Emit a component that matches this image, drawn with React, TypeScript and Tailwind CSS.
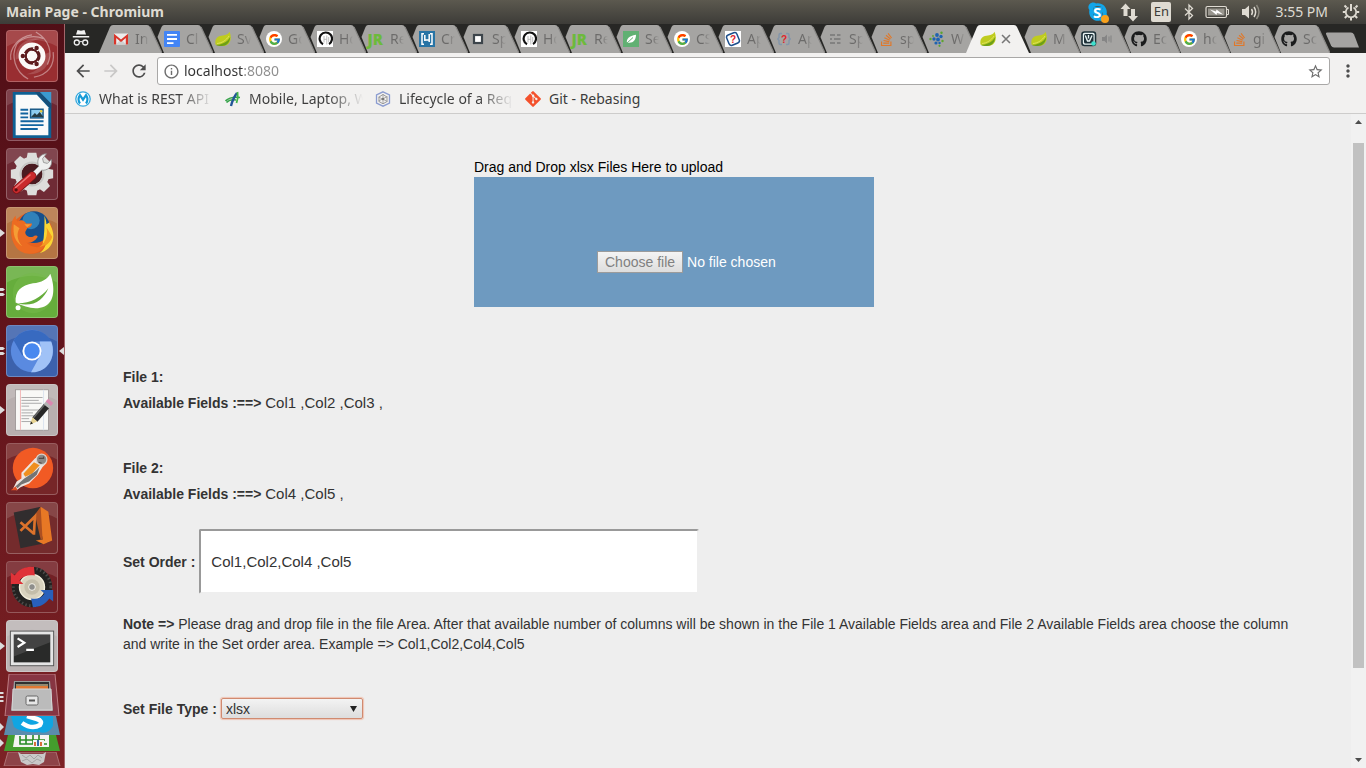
import React from "react";
import { FcGoogle } from "react-icons/fc";
import { FaGithub, FaSkype, FaStackOverflow, FaGitAlt } from "react-icons/fa";
import {
  MdArrowBack,
  MdArrowForward,
  MdRefresh,
  MdInfoOutline,
  MdStarBorder,
  MdMoreVert,
} from "react-icons/md";

/* ---------- favicons ---------- */

const Gmail = () => (
  <svg viewBox="0 0 16 16" className="size-4">
    <path d="M1 2.500h14v11H1z" fill="#ececec" />
    <path d="M3 13.500 8 8l5 5.500z" fill="#d0d0d0" />
    <path d="M1 13.500V2.700L8 8.500l7-5.800v10.800h-2.200V7L8 11 3.200 7v6.500z" fill="#d9352a" />
  </svg>
);
const Docs = () => (
  <svg viewBox="0 0 16 16" className="size-4">
    <rect width="16" height="16" rx="1" fill="#4385f5" />
    <path d="M3 3.800h10M3 8h10M3 12.200h6.500" stroke="#fff" strokeWidth="1.800" />
  </svg>
);
const SpringLeaf = () => (
  <svg viewBox="0 0 16 16" className="size-4">
    <path d="M.5 13.500C-.5 7 3 5 8 4.500 11.500 4 13.500 3 14.500.8 17 6 16 13 10.500 14.500 6.500 15.600 3 14.800.5 13.500Z" fill="#bfcc1f" />
    <path d="M1 14C6 13.500 12 12 15.200 6 15 12 11 15 7 15 4 15 2 14.700 1 14Z" fill="#6d9f18" />
    <path d="M2 12.500C7 12 11 9.500 14 5" stroke="#e3e86c" strokeWidth=".8" fill="none" />
  </svg>
);
const Google = () => (
  <span className="flex size-4 items-center justify-center rounded-full bg-white">
    <FcGoogle size={13} />
  </span>
);
const RingLogo = () => (
  <svg viewBox="0 0 16 16" className="size-4">
    <rect width="16" height="16" fill="#fff" />
    <path d="M6 13.200A6.200 6.200 0 1 1 12 13" stroke="#111" strokeWidth="2.200" fill="none" />
    <path d="M7 5v6.500M9.800 4.500v9M7 8.300h2.800M11.700 6v5" stroke="#b5b5b5" strokeWidth=".9" fill="none" />
  </svg>
);
const JR = () => (
  <svg viewBox="0 0 16 16" className="size-4 overflow-visible">
    <text x="-.5" y="13.500" fontFamily="Open Sans, sans-serif" fontSize="15" fontWeight="800" fill="#6dba3b">
      JR
    </text>
  </svg>
);
const Brackets = () => (
  <svg viewBox="0 0 16 16" className="size-4">
    <rect width="16" height="16" fill="#2874a5" />
    <path d="M5 2.800H3v10.400h2M11 2.800h2v10.400h-2M5.800 4v6M5.800 9h4.400M10.200 3v8" stroke="#fff" strokeWidth="1.500" fill="none" />
  </svg>
);
const Square = () => (
  <svg viewBox="0 0 16 16" className="size-4">
    <rect x="4" y="4" width="8" height="8" fill="#fff" stroke="#3d454b" strokeWidth="2.200" />
  </svg>
);
const GreenLeaf = () => (
  <svg viewBox="0 0 16 16" className="size-4">
    <rect width="16" height="16" fill="#61b073" />
    <path d="M4 12C3 8 6 5 13 3.800c0 5-2.500 8.200-7 8z" fill="#fff" />
    <path d="M3 13 10 6.500" stroke="#61b073" strokeWidth="1" />
  </svg>
);
const QuestionBox = () => (
  <svg viewBox="0 0 16 16" className="size-4">
    <rect width="16" height="16" fill="#fff" />
    <rect x="2.500" y="2.500" width="11" height="11" rx="2.500" transform="rotate(-22 8 8)" fill="none" stroke="#1d4f8c" strokeWidth="1.500" />
    <text x="5" y="12" fontFamily="Liberation Sans, sans-serif" fontSize="10" fontWeight="700" fill="#e0242b">?</text>
  </svg>
);
const QuestionBraces = () => (
  <svg viewBox="0 0 16 16" className="size-4">
    <path d="M6 2.500H4.500Q3 2.500 3 4v2.500L1.800 8 3 9.500V12q0 1.500 1.500 1.500H6M10 2.500h1.500Q13 2.500 13 4v2.500L14.200 8 13 9.500V12q0 1.500-1.500 1.500H10" fill="none" stroke="#8496ab" strokeWidth="1.500" />
    <text x="5" y="11.500" fontFamily="Liberation Sans, sans-serif" fontSize="10" fontWeight="700" fill="#e0242b">?</text>
  </svg>
);
const Dashes = () => (
  <svg viewBox="0 0 16 16" className="size-4">
    <path d="M3 4h5M10 4h3.500M3 8h2M7 8h6.500M3 12h5M10 12h3.500" stroke="#777" strokeWidth="1.600" />
  </svg>
);
const Dots = () => (
  <svg viewBox="0 0 16 16" className="size-4">
    <g fill="#1f63b0">
      <circle cx="8" cy="4" r="1.900" /><circle cx="12" cy="5.500" r="1.700" /><circle cx="5" cy="8" r="1.700" />
      <circle cx="9" cy="8.500" r="1.900" /><circle cx="7" cy="12" r="1.600" /><circle cx="10.500" cy="12" r="1.200" />
    </g>
    <g fill="#5ca52c">
      <circle cx="12.500" cy="1.700" r="1.200" /><circle cx="1.500" cy="8" r="1.200" /><circle cx="13.500" cy="10" r="1.200" />
      <circle cx="10.500" cy="14.800" r="1.100" /><circle cx="4" cy="5" r=".9" />
    </g>
  </svg>
);
const Valve = () => (
  <svg viewBox="0 0 16 16" className="size-4">
    <rect x="1" y="1" width="13.500" height="13.500" rx="2.500" fill="#e9f3f3" stroke="#1d3038" strokeWidth="1.600" />
    <rect x="3" y="3" width="9.500" height="9.500" rx="1.500" fill="#1d3038" />
    <path d="M4.300 4.500 6.500 10h2L11 4.500M7.500 4v3.500" stroke="#e9f3f3" strokeWidth="1.400" fill="none" />
    <circle cx="12.500" cy="12.500" r="2.300" fill="#3fe0cd" />
  </svg>
);
const Stack = () => <FaStackOverflow size={15} color="#e0782a" />;
const Github = () => <FaGithub size={16} color="#1b1c1d" />;

const Speaker = () => (
  <svg viewBox="0 0 12 12" className="size-3">
    <path d="M1 4h2.500L6 1.500v9L3.500 8H1z" fill="#858585" />
    <path d="M8 3.500v5M10 2.500v7" stroke="#858585" strokeWidth="1.100" />
  </svg>
);

type TabInfo = { icon: React.FC; text: string; kind?: "active" | "audio" };

const wideTabs: TabInfo[] = [
  { icon: Gmail, text: "In" },
  { icon: Docs, text: "Cl" },
  { icon: SpringLeaf, text: "Sv" },
  { icon: Google, text: "Go" },
  { icon: RingLogo, text: "Ho" },
  { icon: JR, text: "Re" },
  { icon: Brackets, text: "Cr" },
  { icon: Square, text: "Sp" },
  { icon: RingLogo, text: "Ho" },
  { icon: JR, text: "Re" },
  { icon: GreenLeaf, text: "Se" },
  { icon: Google, text: "CS" },
  { icon: QuestionBox, text: "Ap" },
  { icon: QuestionBraces, text: "Ap" },
  { icon: Dashes, text: "Sp" },
  { icon: Stack, text: "sp" },
  { icon: Dots, text: "W" },
  { icon: SpringLeaf, text: "", kind: "active" },
];
const narrowTabs: TabInfo[] = [
  { icon: SpringLeaf, text: "M" },
  { icon: Valve, text: "", kind: "audio" },
  { icon: Github, text: "Ec" },
  { icon: Google, text: "ho" },
  { icon: Stack, text: "gi" },
  { icon: Github, text: "Sc" },
];

function Tab({ tab, first, width }: { tab: TabInfo; first?: boolean; width: string }) {
  const active = tab.kind === "active";
  const Icon = tab.icon;
  const shape = active || first
    ? "M0 28 11 2Q12 0 14 0H48Q50 0 51 2L63 28Z"
    : "M14 28 7.500 12 11.500 2Q12.500 0 14 0H48Q50 0 51 2L63 28Z";
  return (
    <button className={`relative flex h-7 items-center pl-3.5 ${width} ${active ? "z-10" : ""}`} aria-label={tab.text || "Main Page"}>
      <svg viewBox="0 0 63 28" preserveAspectRatio="none" className="absolute top-0 left-0 h-7 w-[63px]">
        <path d={shape} fill={active ? "#f2f1f0" : "#a5a4a2"} />
        {!active && <path d="M51 2 63 28" stroke="#8b8a88" strokeWidth="1.200" />}
      </svg>
      <span className="relative flex size-4 shrink-0 items-center justify-center"><Icon /></span>
      {tab.kind === "active" && (
        <svg viewBox="0 0 10 10" className="relative ml-1 size-3 shrink-0">
          <path d="M1.700 1.700l6.600 6.600M8.300 1.700l-6.600 6.600" stroke="#777" strokeWidth="1.300" />
        </svg>
      )}
      {tab.kind === "audio" && <span className="relative ml-1 shrink-0"><Speaker /></span>}
      {tab.text && (
        <span className="relative ml-1.5 w-3.5 shrink-0 overflow-hidden bg-linear-to-r from-[#6c6b6a] from-50% to-transparent bg-clip-text text-left font-[Noto_Sans,sans-serif] text-[14px] leading-5 whitespace-nowrap text-transparent">
          {tab.text}
        </span>
      )}
    </button>
  );
}

/* ---------- top panel ---------- */

function SystemBar() {
  return (
    <header className="flex h-6 shrink-0 items-center justify-between bg-linear-to-b from-[#5c594f] to-[#3d3c38] pr-1.5 pl-1.5 font-[Noto_Sans,sans-serif] text-[#dfdbd2]">
      <h1 className="text-[14px] leading-6 font-bold">Main Page - Chromium</h1>
      <div className="flex items-center">
        <span className="relative mr-2.5 flex size-[22px] items-center justify-center">
          <FaSkype size={22} color="#12a5e8" />
          <svg viewBox="0 0 22 22" className="absolute inset-0">
            <path d="M6.500 6h9v10h-9z" fill="#12a5e8" />
            <text x="6" y="16.500" fontSize="15" fontWeight="700" fontFamily="Open Sans, sans-serif" fill="#fff">S</text>
            <circle cx="18" cy="18" r="4" fill="#f9a11b" />
          </svg>
        </span>
        <svg viewBox="0 0 20 20" className="mr-3 size-5" fill="#dfdbd2">
          <path d="M6.500 1.500 11.500 7H8.500v7h-4V7h-3zM14 19.500 9 14h3V7h4v7h3z" />
        </svg>
        <span className="mr-3 flex h-5 w-5 items-center justify-center rounded-xs bg-[#dfdbd2] text-[13px] text-[#3d3c38]">En</span>
        <svg viewBox="0 0 12 18" className="mr-2.5 h-[18px] w-3" fill="none" stroke="#dfdbd2" strokeWidth="1.300">
          <path d="m2 5.500 7.500 7-3.500 3.500V2l3.500 3.500-7.500 7" />
        </svg>
        <svg viewBox="0 0 24 14" className="mr-3 h-3.5 w-6">
          <rect x="1" y="1.500" width="20.500" height="11" rx="1.500" fill="none" stroke="#dfdbd2" strokeWidth="1.200" />
          <rect x="3" y="3.500" width="16.500" height="7" fill="#98958d" />
          <path d="M22 4.500h1.500v5H22" stroke="#dfdbd2" fill="none" />
          <path d="m5 4.500 6 2 .5-2L18 9.500l-6-1.500-.5 2z" fill="#fff" />
        </svg>
        <svg viewBox="0 0 20 18" className="mr-3.5 h-[18px] w-5">
          <path d="M1 6h3l4-3.500v13L4 12H1z" fill="#dfdbd2" />
          <path d="M10.500 6q2 3 0 6M13 4q3.300 5 0 10" stroke="#dfdbd2" strokeWidth="1.500" fill="none" />
          <path d="M15.500 2q5 7 0 14" stroke="#8c897f" strokeWidth="1.500" fill="none" />
        </svg>
        <time className="mr-3.5 text-[14px] leading-6">3:55 PM</time>
        <svg viewBox="0 0 18 18" className="size-[18px]" fill="none" stroke="#dfdbd2">
          <path d="M6.500 4.500a5.200 5.200 0 1 0 5 0" strokeWidth="1.700" />
          <path d="M9 1v7" strokeWidth="2" />
          <path d="m4.500 4.500-2-2M13.500 4.500l2-2M3.500 9H.8M14.500 9h2.700M4.800 13l-2 2M13.200 13l2 2M9 15v2.500" strokeWidth="2" />
        </svg>
      </div>
    </header>
  );
}

/* ---------- launcher ---------- */

const Tile = ({ label, bg, marks, active, children }: { label: string; bg: string; marks?: number; active?: boolean; children: React.ReactNode }) => (
  <button aria-label={label} className="relative flex w-full shrink-0 justify-start pl-1.5">
    <svg viewBox="0 0 52 52" className={`size-[52px] rounded-[4px] border border-white/25 ${bg}`}>
      <path d="M0 0h52v16Q26 2 0 16z" fill="#fff" opacity=".13" />
      {children}
    </svg>
    {marks === 1 && (
      <svg viewBox="0 0 5 8" className="absolute top-[22px] left-0 h-2 w-[5px]"><path d="M0 0l5 4-5 4z" fill="#dcdcdc" /></svg>
    )}
    {marks === 2 && (
      <svg viewBox="0 0 5 8" className="absolute top-[22px] left-0 h-2 w-[5px]"><path d="M0 0h3l2 1.500L3 3H0zM0 5h3l2 1.500L3 8H0z" fill="#dcdcdc" /></svg>
    )}
    {active && (
      <svg viewBox="0 0 5 8" className="absolute top-[22px] right-0 h-2 w-[5px]"><path d="M5 0 0 4l5 4z" fill="#dcdcdc" /></svg>
    )}
  </button>
);

const gearTeeth = [0, 45, 90, 135, 180, 225, 270, 315];

function Launcher() {
  return (
    <nav aria-label="Launcher" className="flex w-[65px] shrink-0 flex-col gap-[7px] overflow-hidden border-r border-[#a3656a] bg-linear-to-b from-[#510f17] via-[#65151c] to-[#7c2225] pt-1.5">
      <Tile label="Search" bg="bg-[#992e31]">
        <g fill="none" stroke="#fff" strokeWidth="1.300" opacity=".4">
          <path d="M22 50C8 42 4 26 10 14 16 6 28 4 38 8M30 1c14 8 18 22 12 34M4 30c-2-12 8-24 22-26M48 22c2 14-6 24-20 26" />
        </g>
        <path d="M9 30c-1-14 10-24 26-22-12 2-20 8-22 20z" fill="#fff" opacity=".15" />
        <path d="M44 22c2 14-8 24-24 23 12-3 18-9 20-21z" fill="#fff" opacity=".15" />
        <circle cx="26" cy="26" r="14" fill="#fbf8f7" />
        <circle cx="26" cy="26" r="7.300" fill="none" stroke="#5d1b1e" strokeWidth="3.400" />
        <path d="M19 26h-5M29.500 20l2.500-4.300M29.500 32l2.500 4.300" stroke="#fbf8f7" strokeWidth="6" />
        <circle cx="16.500" cy="26" r="2.300" fill="#5d1b1e" /><circle cx="30.800" cy="17.700" r="2.300" fill="#5d1b1e" /><circle cx="30.800" cy="34.300" r="2.300" fill="#5d1b1e" />
        <circle cx="26" cy="26" r="6.500" fill="none" stroke="#5d1b1e" strokeWidth="2" strokeDasharray="9.600 4" strokeDashoffset="-15.500" />
      </Tile>
      <Tile label="LibreOffice Writer" bg="bg-[#6c2632]">
        <path d="M6 2h28l12 13v35H6z" fill="#0e6094" />
        <path d="M34 2h12v13z" fill="#3b9ad0" />
        <path d="M9 5h22l12 13v29H9z" fill="#fafafa" />
        <path d="M29 2 46 20v-6L34 2z" fill="#174f79" />
        <path d="M14 20.500h8M14 24.500h8M14 28.500h8M14 32.500h24M14 36.500h24M14 40.500h18" stroke="#1465a0" strokeWidth="2" />
        <rect x="24.500" y="20" width="13" height="9" fill="#8dccee" stroke="#175785" strokeWidth="1.500" />
        <path d="m25 28 4-4 2 2 3-3 4 5z" fill="#263c43" /><circle cx="35.500" cy="22" r="1.300" fill="#e9c934" />
      </Tile>
      <Tile label="System Settings" bg="bg-[#6f2b35]">
        <g fill="#dddddb">
          {gearTeeth.map((a) => <path key={a} d="M21.500 4h9l1.500 8H20z" transform={`rotate(${a} 26 26)`} />)}
          <circle cx="26" cy="26" r="18" />
        </g>
        <circle cx="26" cy="26" r="11" fill="#4a1b21" />
        <circle cx="26" cy="26" r="12" fill="none" stroke="#c6c6c4" strokeWidth="2" />
        <path d="M19 32 33 18c-3-6 1-13 8-13l-4 5 1 4 4 1 4-4c2 7-4 12-10 11L23 36z" fill="#efefef" stroke="#8b8b8b" strokeWidth=".8" />
        <path d="M10 42 26 28" stroke="#7c1215" strokeWidth="9" strokeLinecap="round" />
        <path d="M10 42 26 28" stroke="#c92a2c" strokeWidth="7.500" strokeLinecap="round" />
        <path d="M9 40 24 27" stroke="#ee7775" strokeWidth="1.500" strokeLinecap="round" />
        <circle cx="9.500" cy="42.500" r="1.700" fill="#571012" />
      </Tile>
      <Tile label="Firefox" bg="bg-[#b57543]" marks={1}>
        <circle cx="26" cy="26" r="21.500" fill="#e5601f" />
        <circle cx="28" cy="20" r="16.500" fill="#164f8c" />
        <circle cx="25" cy="13" r="9" fill="#3a92c9" opacity=".75" />
        <path d="M39 8c1 3 2 6 2 9l3-2c3 7 5 11 4 17-1 8-7 13-14 15 5-4 7-9 7-14l-4 5c2-9 2-20 2-30z" fill="#fbd534" />
        <path d="M41 20c2 8-1 18-10 22 8-1 14-5 16-12z" fill="#f59a23" />
        <path d="M5 17C5 13 7 10 9 8c0 3 1 5 2 6 4-2 6-2 9 2h6c0 3-2 4-5 5l-2 4c0 4 4 6 8 5 2-2 4-2 5 0-3 5-8 7-12 6 6 6 14 6 20 2-5 10-18 12-26 7C6 40 3 28 5 17z" fill="#ec6b22" />
        <path d="M7 17c-1 11 1 18 9 23-6-7-6-14-3-19zM18 17l7 0-4 3z" fill="#f59d35" />
      </Tile>
      <Tile label="Spring Tool Suite" bg="bg-[#66ad3c]" marks={2}>
        <circle cx="27" cy="27" r="21" fill="#75b94a" opacity=".5" />
        <path d="M9 37c-1-12 6-18 18-20 9-1 15-4 18-10 5 14 5 29-6 34-9 4-20 1-30-4z" fill="#fff" />
        <path d="M11 38c14-1 24-6 32-16-5 12-15 20-32 16z" fill="#66ad3c" />
        <circle cx="11.500" cy="42.500" r="2.600" fill="#fff" />
      </Tile>
      <Tile label="Chromium" bg="bg-[#3c61ac]" marks={2} active>
        <circle cx="26" cy="26" r="22" fill="#5a8ae0" />
        <path d="M7 15C15 1 37 0 46 16H26L16 31z" fill="#386ac0" />
        <path d="M46 16c6 16-4 33-21 32L36 28l-2-12z" fill="#a0c2f7" />
        <circle cx="26" cy="26" r="10" fill="#fff" /><circle cx="26" cy="26" r="8" fill="#4888ef" />
      </Tile>
      <Tile label="Text Editor" bg="bg-[#b8afaf]" marks={1}>
        <rect x="9" y="5" width="34" height="42" fill="#f8f8f6" stroke="#908a8a" strokeWidth=".7" />
        <path d="M14 5v42" stroke="#f0b5b5" /><path d="M38 5v42" stroke="#dbe3ee" />
        <path d="M15 13h22M15 16h18M15 19h21M15 22h8M15 26h20M15 29h12M15 32h17M15 35h8M15 38h12" stroke="#a9a9a9" strokeWidth="1" />
        <path d="M29 36 41 22" stroke="#262626" strokeWidth="7" /><path d="M27.500 34 39 20.500" stroke="#696969" strokeWidth="1.500" />
        <path d="M41 22l3-3.500" stroke="#b4b4b4" strokeWidth="7" /><path d="M43 19.500l2.500-3" stroke="#db88b1" strokeWidth="7" />
        <path d="m26.500 33.500 5 4.500-7.500 3z" fill="#e6d392" /><path d="m25 38-1 3 3-1z" fill="#222" />
      </Tile>
      <Tile label="Postman" bg="bg-[#762628]">
        <circle cx="27" cy="25" r="21" fill="#f15a24" />
        <path d="M6 47l4-8 5-3 0-6 14-15 5-3 6 3 1 5-4 4-5 8-9 9-9 4-4 3z" fill="#eee3df" />
        <path d="m17 31 11-12 6 3-8 9-7 3z" fill="#ef8f1f" />
        <path d="m9 44 9-8 12-8 4-4-3 8-8 7-8 3-4 4z" fill="#747474" />
        <circle cx="36" cy="16" r="5.500" fill="#8b8785" stroke="#d8d3ce" strokeWidth="1.300" />
        <path d="M33 15h5v-2M33 19l3 1" stroke="#554b47" strokeWidth="1.300" fill="none" />
        <path d="m4 48 5-4 2 4z" fill="#df4e26" />
      </Tile>
      <Tile label="Visual Studio Code" bg="bg-[#742b2c]">
        <path d="M7 10 35 4l8 37-29 6z" fill="#312d2e" />
        <path d="m35 4 8 5 4 30-9 4-8-4 7-1-4-29z" fill="#e77825" />
        <path d="m35 4 2 34-8 1 6-1-6-26z" fill="#ad5021" />
        <path d="m14 20 14 12M14 29l15-15-1 19" fill="none" stroke="#dc722b" strokeWidth="2.800" />
      </Tile>
      <Tile label="Software Updater" bg="bg-[#722025]">
        <circle cx="26" cy="26" r="21" fill="#222221" />
        <circle cx="26" cy="26" r="19.500" fill="none" stroke="#4c4c4a" strokeWidth="3" strokeDasharray="1.500 2.500" />
        <circle cx="26" cy="26" r="13" fill="#d9d3bf" stroke="#f4efdc" strokeWidth="1.500" />
        <circle cx="26" cy="26" r="8" fill="#c4beaa" />
        <circle cx="26" cy="26" r="3.500" fill="#8e8e8b" stroke="#f7f5ea" />
        <path d="M4 11v12h13l-4-4c4-5 10-6 16-5L28 5C18 4 12 8 8 14z" fill="#df3238" />
        <path d="M48 41V29H35l4 4c-4 5-8 6-14 5l2 9c7 0 13-3 17-9z" fill="#2860bb" />
      </Tile>
      <Tile label="Terminal" bg="bg-[#bbb4b4]" marks={1}>
        <rect x="3" y="10" width="46" height="37" fill="#555" /><rect x="4" y="11" width="44" height="35" fill="#e5e5e5" /><rect x="7" y="14" width="38" height="29" fill="#292a29" />
        <path d="M7 14h38v8L7 37z" fill="#fff" opacity=".12" />
        <path d="m11 18 7 4.500-7 4.500M20 30h8" fill="none" stroke="#fff" strokeWidth="2.300" />
      </Tile>
      <div className="-mt-[5px] flex flex-col">
        <button aria-label="Files" className="h-[42px]">
          <svg viewBox="0 0 64 42" className="h-[42px] w-16">
            <path d="M9 0h46l4 42H5z" fill="#873542" stroke="#bd7d83" />
            <path d="M14 7h36l3 30H11z" fill="#999" /><path d="M15 8h34v8H15z" fill="#2f2f2f" />
            <path d="M16 12h32v4H16z" fill="#df7833" /><path d="M16 11h32" stroke="#f4e5b1" />
            <path d="M13 15h38l1 21H12z" fill="#bbb" stroke="#d7d7d7" />
            <rect x="26" y="22" width="12" height="9" rx="1.500" fill="#e6e6e6" stroke="#666" /><path d="M29 25.500h6v2h-6z" fill="#555" />
            <path d="M0 18h3l1 1-1 1H0zM0 22h3l1 1-1 1H0zM0 26h3l1 1-1 1H0z" fill="#ddd" />
          </svg>
        </button>
        <button aria-label="Skype" className="h-[19px]">
          <svg viewBox="0 0 64 19" className="h-[19px] w-16">
            <path d="M8 0h48l4 19H4z" fill="#5b8cad" /><path d="M11 0h42v10q-5 9-14 6-18 1-25-5z" fill="#10a5e2" />
            <path d="M22 7q10 7 18 2 3-4-3-6l-10-3" fill="none" stroke="#fff" strokeWidth="4.500" /><path d="M0 7l4 4-4 4z" fill="#ddd" />
          </svg>
        </button>
        <button aria-label="LibreOffice Calc" className="h-[17px]">
          <svg viewBox="0 0 64 17" className="h-[17px] w-16">
            <path d="M8 0h48l4 16H4z" fill="#449e2d" /><path d="M15 0h34v12H13z" fill="#f4f4f2" />
            <path d="M20 1v8h27M20 5h25M26 0v9M33 0v9M39 0v9" fill="none" stroke="#278b25" strokeWidth="1.600" />
            <path d="M33 5h11v6H33z" fill="#f4f4f2" />
            <path d="M35 11V7M41 11V7" stroke="#d96d3b" strokeWidth="2" /><path d="M38 11V5" stroke="#3567a8" strokeWidth="2" /><path d="M0 4l4 4-4 4z" fill="#ddd" />
          </svg>
        </button>
        <button aria-label="Trash" className="h-[14px]">
          <svg viewBox="0 0 64 14" className="h-[14px] w-16">
            <path d="M8 0h48l4 14H4z" fill="#8d4348" stroke="#ad7073" />
            <path d="m18 0 3 2h22l3-2-2 10-5 3-6-1-6 1-6-3z" fill="#c9c9c9" />
            <path d="m22 3 4 3 4-3 4 4 4-4 4 3M22 9l5-2 5 4 5-4 4 2" fill="none" stroke="#a4a4a4" />
          </svg>
        </button>
      </div>
    </nav>
  );
}

/* ---------- browser chrome ---------- */

const bookmarks = [
  {
    text: "What is REST API",
    icon: (
      <svg viewBox="0 0 16 16" className="size-4">
        <circle cx="8" cy="8" r="7.200" fill="#fff" stroke="#35a9de" strokeWidth="1.300" />
        <path d="M5 12.500Q2 8.500 5 4.200l3 4.500 3-4.500Q14 8.500 11 12.500" fill="none" stroke="#169bd7" strokeWidth="2.200" />
      </svg>
    ),
  },
  {
    text: "Mobile, Laptop, W",
    icon: (
      <svg viewBox="0 0 16 16" className="size-4">
        <path d="M.5 10Q5 5.500 15 6.500M1.500 11.500Q5 8 11 9" fill="none" stroke="#37a34a" strokeWidth="1.600" />
        <path d="M6 15q2-8 6-13" fill="none" stroke="#235698" strokeWidth="2.400" /><path d="M12.500 1q1 6-1 11" fill="none" stroke="#43b649" strokeWidth="1.800" />
      </svg>
    ),
  },
  {
    text: "Lifecycle of a Req",
    icon: (
      <svg viewBox="0 0 16 16" className="size-4" fill="none">
        <path d="M8 .8 14.500 4v8L8 15.200 1.500 12V4z" stroke="#8b9cd0" strokeWidth="1.300" />
        <path d="M8 3.500 12 6v4.500L8 12.800 4 10.500V6z" stroke="#999" /><path d="M8 3v10M3.500 6l9 4.500M3.500 10l9-4.500" stroke="#999" strokeWidth=".8" /><circle cx="8" cy="8" r="1.300" fill="#777" />
      </svg>
    ),
  },
  { text: "Git - Rebasing", icon: <FaGitAlt size={18} color="#f4512c" /> },
];

function BrowserChrome() {
  return (
    <div className="shrink-0">
      <div className="flex h-[29px] items-end overflow-hidden bg-[#272725]">
        <svg viewBox="0 0 18 18" className="mb-1.5 ml-[7px] size-[18px] shrink-0" fill="#f1f1f1">
          <path d="M5.500 1 9 1.800 12.500 1 14 5.500H4zM.8 7h16.400v1.500H.8z" />
          <circle cx="4.800" cy="13.500" r="2.500" fill="none" stroke="#f1f1f1" strokeWidth="1.300" />
          <circle cx="13.200" cy="13.500" r="2.500" fill="none" stroke="#f1f1f1" strokeWidth="1.300" />
          <path d="M7.500 13q1.500-1 3 0" stroke="#f1f1f1" fill="none" />
        </svg>
        <div className="ml-[9px] flex min-w-0">
          {wideTabs.map((tab, i) => <Tab key={i} tab={tab} first={i === 0} width="w-[51px]" />)}
          {narrowTabs.map((tab, i) => <Tab key={i} tab={tab} width="w-[50px]" />)}
        </div>
        <button aria-label="New tab" className="mb-[5px] ml-2 shrink-0">
          <svg viewBox="0 0 34 16" className="h-4 w-[34px]"><path d="M2 .5h24q2 0 3 2l5 13H9q-2 0-3-2L1 2Q.5.500 2 .5z" fill="#a5a4a2" /></svg>
        </button>
      </div>
      <div className="flex h-9 items-center bg-[#f2f1f0] px-2 text-[#4d4d4d]">
        <button aria-label="Back"><MdArrowBack size={20} /></button>
        <button aria-label="Forward" className="ml-2 text-[#c9c8c7]"><MdArrowForward size={20} /></button>
        <button aria-label="Reload" className="ml-2"><MdRefresh size={20} /></button>
        <div className="ml-2 flex h-7 min-w-0 flex-1 items-center rounded-[3px] border border-[#a9a8a7] bg-white px-[5px]">
          <MdInfoOutline size={17} color="#6d6d6d" className="shrink-0" />
          <input
            aria-label="Address"
            defaultValue="localhost:8080"
            className="ml-1 min-w-0 flex-1 bg-[linear-gradient(90deg,#333333_59px,#8d8d8d_59px)] bg-clip-text font-[Noto_Sans,sans-serif] text-[14px] leading-6 text-transparent outline-none"
          />
          <button aria-label="Bookmark"><MdStarBorder size={17} color="#6d6d6d" /></button>
        </div>
        <button aria-label="Menu" className="ml-2"><MdMoreVert size={20} /></button>
      </div>
      <div className="flex h-[25px] border-b border-[#cdcccb] bg-[#f2f1f0] pl-2.5 font-[Noto_Sans,sans-serif] text-[14px] leading-5">
        {bookmarks.map((b) => (
          <a key={b.text} href="#" className="flex w-[150px] items-center pb-1">
            <span className="mr-2 flex size-4 shrink-0 items-center justify-center">{b.icon}</span>
            <span className={`w-[114px] overflow-hidden whitespace-nowrap ${b.text.startsWith("Git") ? "text-[#3c3c3c]" : "bg-linear-to-r from-[#3c3c3c] from-70% to-transparent bg-clip-text text-transparent"}`}>{b.text}</span>
          </a>
        ))}
      </div>
    </div>
  );
}

/* ---------- page ---------- */

function Page() {
  return (
    <main className="min-w-0 flex-1 overflow-hidden font-[Liberation_Sans,Arial,sans-serif] text-[14px] leading-5 text-[#333]">
      <div className="mx-auto w-full max-w-[1170px] pt-[43px]">
        <section className="ml-[30%] w-[400px] text-black">
          <p>Drag and Drop xlsx Files Here to upload</p>
          <div className="flex h-[130px] items-center justify-start bg-[#6e9ac0] pt-10 pl-[123px] text-white">
            <input id="upload" type="file" className="sr-only" />
            <label htmlFor="upload" className="border border-[#9b9b9b] bg-linear-to-b from-[#f4f4f4] to-[#dddddd] px-[7px] text-[#808080]">Choose file</label>
            <span className="ml-1">No file chosen</span>
          </div>
        </section>
        <section className="mt-[60px]">
          <h2 className="font-bold">File 1:</h2>
          <p className="mt-1.5"><b>Available Fields :==&gt;</b> <span className="text-[15px]">Col1 ,Col2 ,Col3 ,</span></p>
        </section>
        <section className="mt-[45px]">
          <h2 className="font-bold">File 2:</h2>
          <p className="mt-1.5"><b>Available Fields :==&gt;</b> <span className="text-[15px]">Col4 ,Col5 ,</span></p>
        </section>
        <div className="mt-[25px] flex items-center">
          <label htmlFor="order" className="mr-1 font-bold">Set Order :</label>
          <input id="order" defaultValue="Col1,Col2,Col4 ,Col5" className="h-[65px] w-[500px] rounded-[2px] border-2 border-t-[#999] border-r-[#eee] border-b-[#eee] border-l-[#999] bg-white px-2.5 text-[15px] outline-none" />
        </div>
        <p className="mt-5">
          <b>Note =&gt;</b> Please drag and drop file in the file Area. After that available number of columns will be shown in the File 1 Available Fields area and File 2 Available Fields area choose the column and write in the Set order area. Example =&gt; Col1,Col2,Col4,Col5
        </p>
        <div className="mt-11 flex items-center">
          <label htmlFor="type" className="mr-1 font-bold">Set File Type :</label>
          <div className="relative">
            <select id="type" defaultValue="xlsx" className="block h-[21px] w-[142px] appearance-none rounded-[2px] border border-[#d08a70] bg-linear-to-b from-[#f3f3f3] to-[#dddddd] pl-1 text-[14px] leading-[18px] shadow-[0_0_1px_1px_#efc3b2] outline-none">
              <option>xlsx</option>
              <option>xls</option>
              <option>csv</option>
            </select>
            <svg viewBox="0 0 7 6" className="pointer-events-none absolute top-2 right-1.5 h-1.5 w-[7px]"><path d="M0 0h7L3.500 6z" fill="#222" /></svg>
          </div>
        </div>
      </div>
    </main>
  );
}

export default function App() {
  return (
    <div className="flex h-screen flex-col overflow-hidden bg-[#eee]">
      <SystemBar />
      <div className="flex min-h-0 flex-1">
        <Launcher />
        <div className="flex min-w-0 flex-1 flex-col">
          <BrowserChrome />
          <div className="flex min-h-0 flex-1">
            <Page />
            <div className="flex w-[15px] shrink-0 flex-col items-center justify-between bg-[#f1f1f1] pt-1.5 pb-1.5">
              <svg viewBox="0 0 7 4" className="h-1 w-[7px]"><path d="M0 4h7L3.500 0z" fill="#4d4d4d" /></svg>
              <div className="mt-[19px] mb-[90px] w-[11px] flex-1 bg-[#c1c1c1]" />
              <svg viewBox="0 0 7 4" className="h-1 w-[7px]"><path d="M0 0h7L3.500 4z" fill="#4d4d4d" /></svg>
            </div>
          </div>
        </div>
      </div>
    </div>
  );
}
